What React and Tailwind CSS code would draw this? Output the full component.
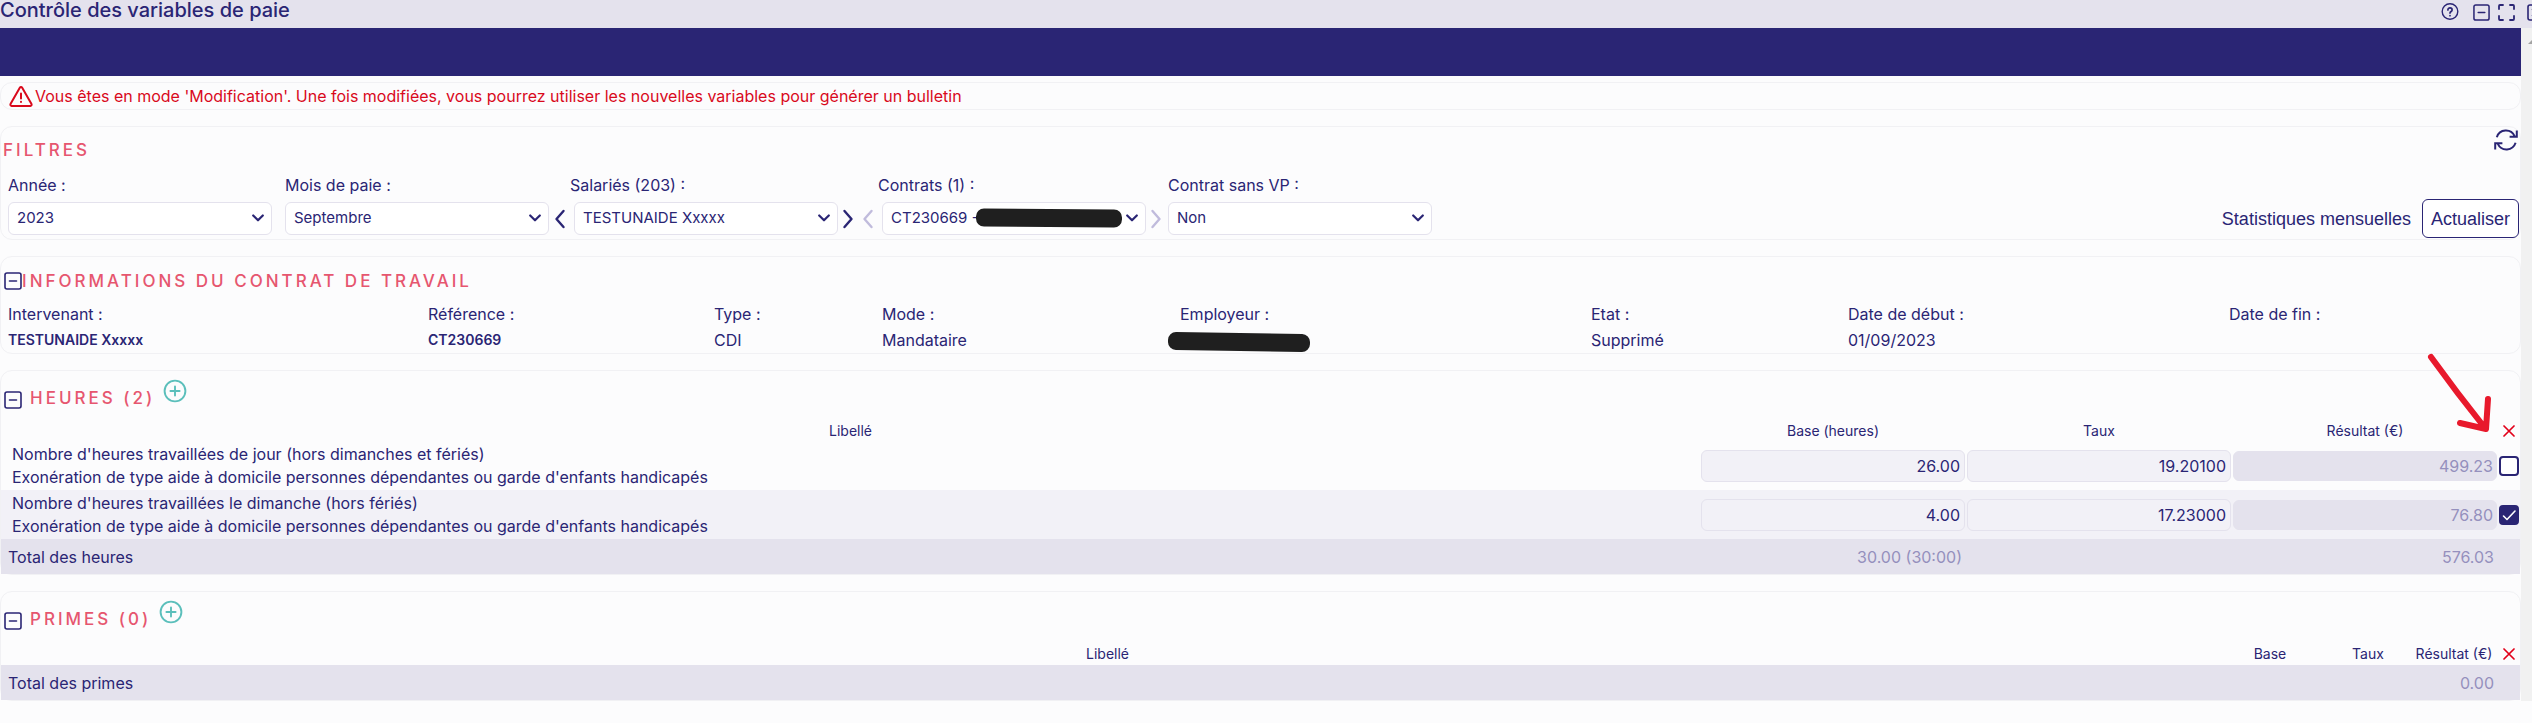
import React from "react";

const SquareMinus = ({ className }) => (
  <svg viewBox="0 0 18 18" className={className} fill="none" stroke="currentColor" strokeWidth="1.6" strokeLinecap="round" aria-hidden="true">
    <rect x="1" y="1" width="16" height="16" rx="2" />
    <path d="M5.5 9h7" />
  </svg>
);

const Plus = () => (
  <svg viewBox="0 0 24 24" className="size-6" fill="none" stroke="currentColor" strokeWidth="1.9" strokeLinecap="round" aria-hidden="true">
    <circle cx="12" cy="12" r="10.4" />
    <path d="M12 7.4v9.2M7.4 12h9.2" />
  </svg>
);

const Angle = ({ left }) => (
  <svg viewBox="0 0 12 20" className="h-5 w-3" fill="none" stroke="currentColor" strokeWidth="2.4" strokeLinecap="round" strokeLinejoin="round" aria-hidden="true">
    <path d={left ? "M9.5 2 2.5 10l7 8" : "M2.5 2l7 8-7 8"} />
  </svg>
);

const Cross = () => (
  <svg viewBox="0 0 12 12" className="mx-auto size-3" fill="none" stroke="#e2001a" strokeWidth="1.7" strokeLinecap="round" role="img" aria-label="Supprimer">
    <path d="M1 1l10 10M11 1L1 11" />
  </svg>
);

const Panel = ({ className = "", children }) => (
  <section className={`relative rounded-xl border border-[#f1f1f4] bg-[#fcfcfd] ${className}`}>{children}</section>
);

const titleClass = "text-[17px] leading-6 font-medium uppercase tracking-[3px] text-[#e6566f]";

function Filter({ id, label, value, className = "", before, after, children }) {
  return (
    <div className={`flex items-end ${className}`}>
      {before}
      <div className="w-[264px]">
        <label htmlFor={id} className={`block h-7 leading-[22px] whitespace-nowrap ${before ? "-ml-1" : ""}`}>{label}</label>
        <div className="relative">
          <select id={id} defaultValue={value} className="block h-[33px] w-full appearance-none rounded-md border border-[#e4e2ed] bg-white pr-8 pl-2 text-[15px] text-[#2a2574]">
            <option>{value}</option>
          </select>
          <svg viewBox="0 0 12 8" className="pointer-events-none absolute top-3 right-2 h-2 w-3" fill="none" stroke="currentColor" strokeWidth="2.2" strokeLinecap="round" strokeLinejoin="round" aria-hidden="true">
            <path d="M1.2 1.5 6 6.3l4.8-4.8" />
          </svg>
          {children}
        </div>
      </div>
      {after}
    </div>
  );
}

const Nav = ({ left, disabled, label }) => (
  <button type="button" disabled={disabled} aria-label={label} className={`flex h-[33px] items-center ${left ? "pr-2" : "pl-1"} ${disabled ? "text-[#c0bbdc]" : ""}`}>
    <Angle left={left} />
  </button>
);

const infos = [
  ["Intervenant :", "TESTUNAIDE Xxxxx", true],
  ["Référence :", "CT230669", true],
  ["Type :", "CDI"],
  ["Mode :", "Mandataire"],
  ["Employeur :", null],
  ["Etat :", "Supprimé"],
  ["Date de début :", "01/09/2023"],
  ["Date de fin :", ""],
];

const heures = [
  { label: "Nombre d'heures travaillées de jour (hors dimanches et fériés)", base: "26.00", taux: "19.20100", res: "499.23", checked: false },
  { label: "Nombre d'heures travaillées le dimanche (hors fériés)", base: "4.00", taux: "17.23000", res: "76.80", checked: true },
];

function SectionTitle({ children, action }) {
  return (
    <div className="flex h-[50px] items-start pt-3 pl-[3px]">
      <button type="button" aria-label="Replier" className="mt-2 mr-2"><SquareMinus className="size-[18px]" /></button>
      <h2 className={`${titleClass} mt-[3px]`}>{children}</h2>
      <button type="button" aria-label={action} className="-mt-1 ml-2 text-[#5bbfbb]"><Plus /></button>
    </div>
  );
}

const cellInput = "block w-full rounded-md border text-right";

export default function App() {
  return (
    <div className="min-h-screen overflow-hidden bg-[#fcfcfd] font-['Inter','Noto_Sans',sans-serif] text-base font-normal text-[#2a2574]">
      <header className="flex h-7 items-start justify-between bg-[#e4e2ed]">
        <h1 className="text-xl leading-5 font-medium whitespace-nowrap">Contrôle des variables de paie</h1>
        <div className="-mr-3 flex items-center pt-[3px]">
          <button type="button" aria-label="Aide" className="mr-[14px]">
            <svg viewBox="0 0 18 18" className="size-[18px]" fill="none" stroke="currentColor" strokeWidth="1.4" strokeLinecap="round">
              <circle cx="9" cy="8.5" r="7.8" />
              <path d="M6.9 6.9c0-2.7 4.2-2.6 4.2 0 0 1.6-2.1 1.5-2.1 3.2M9 12.6v.1" strokeWidth="1.7" />
            </svg>
          </button>
          <button type="button" aria-label="Réduire" className="mr-2"><SquareMinus className="size-[17px]" /></button>
          <button type="button" aria-label="Plein écran" className="mr-3">
            <svg viewBox="0 0 17 17" className="size-[17px]" fill="none" stroke="currentColor" strokeWidth="1.8" strokeLinecap="round">
              <path d="M1 5V2a1 1 0 0 1 1-1h3M12 1h3a1 1 0 0 1 1 1v3M16 12v3a1 1 0 0 1-1 1h-3M5 16H2a1 1 0 0 1-1-1v-3" />
            </svg>
          </button>
          <button type="button" aria-label="Fermer">
            <svg viewBox="0 0 17 17" className="size-[17px]" fill="none" stroke="currentColor" strokeWidth="1.6" strokeLinecap="round">
              <rect x="1" y="1" width="15" height="15" rx="2" />
              <path d="M5.5 5.5l6 6M11.5 5.5l-6 6" />
            </svg>
          </button>
        </div>
      </header>

      <div className="flex">
        <main className="min-w-0 flex-1">
          <div className="h-12 bg-[#2a2574]" />
          <div className="flex flex-col gap-4 pt-1.5">
            <Panel className="flex h-7 items-center pl-2 text-[#d9091c]">
              <svg viewBox="0 0 24 21" className="h-[21px] w-6" fill="none" stroke="currentColor" strokeWidth="2" strokeLinecap="round" strokeLinejoin="round" aria-hidden="true">
                <path d="M10.8 1.8a1.4 1.4 0 0 1 2.4 0l9.3 16.3a1.3 1.3 0 0 1-1.1 1.9H2.6a1.3 1.3 0 0 1-1.1-1.9z" />
                <path d="M12 7.5v5M12 15.8v.1" />
              </svg>
              <p className="pl-0.5 whitespace-nowrap">Vous êtes en mode 'Modification'. Une fois modifiées, vous pourrez utiliser les nouvelles variables pour générer un bulletin</p>
            </Panel>

            <Panel className="h-[114px]">
              <div className="flex justify-between pt-[11px] pl-0.5">
                <h2 className={titleClass}>Filtres</h2>
                <button type="button" aria-label="Rafraîchir" className="-mt-2.5 mr-0.5 h-6">
                  <svg viewBox="0 0 24 24" className="size-6" fill="none" stroke="currentColor" strokeWidth="2" aria-hidden="true">
                    <path d="M2.8 9.2a9.6 9.6 0 0 1 17.8-1.1M22.8 2.4v6.4h-7.2M21.6 14.8a9.6 9.6 0 0 1-17.8 1.1M1.2 21.6v-6.4h7.2" />
                  </svg>
                </button>
              </div>
              <div className="flex items-end justify-between pt-3 pr-px pl-[7px]">
                <div className="flex items-end">
                  <Filter id="annee" label="Année :" value="2023" className="mr-[13px]" />
                  <Filter id="mois" label="Mois de paie :" value="Septembre" className="mr-[5px]" />
                  <Filter id="salaries" label="Salariés (203) :" value="TESTUNAIDE Xxxxx" className="mr-2"
                    before={<Nav left label="Salarié précédent" />} after={<Nav label="Salarié suivant" />} />
                  <Filter id="contrats" label="Contrats (1) :" value="CT230669 -" className="mr-1.5"
                    before={<Nav left disabled label="Contrat précédent" />} after={<Nav disabled label="Contrat suivant" />}>
                    <span className="absolute top-[7px] left-[94px] h-[18px] w-[146px] rotate-[0.4deg] rounded-lg bg-[#1f1f1f]" />
                  </Filter>
                  <Filter id="sansvp" label="Contrat sans VP :" value="Non" />
                </div>
                <div className="flex items-center font-['Liberation_Sans',Arial,sans-serif] text-lg">
                  <button type="button" className="px-[11px] whitespace-nowrap">Statistiques mensuelles</button>
                  <button type="button" className="-my-[3px] h-[39px] rounded-md border border-[#2a2574] bg-white px-2">Actualiser</button>
                </div>
              </div>
            </Panel>

            <Panel className="h-[98px]">
              <div className="flex items-center pt-3 pl-[3px]">
                <button type="button" aria-label="Replier"><SquareMinus className="size-[18px]" /></button>
                <h2 className={`${titleClass} whitespace-nowrap`}>Informations du contrat de travail</h2>
              </div>
              <dl className="grid grid-cols-[420fr_286fr_168fr_286fr_423fr_257fr_381fr_291fr] pt-2 pl-[7px]">
                {infos.map(([k, v, bold]) => (
                  <div key={k} className="min-w-0">
                    <dt className={`leading-[26px] whitespace-nowrap ${v === null ? "pl-3" : ""}`}>{k}</dt>
                    <dd className={`leading-[26px] whitespace-nowrap ${bold ? "text-sm leading-[26px] font-semibold" : ""}`}>
                      {v === null ? <span className="mt-1.5 block h-[18px] w-[142px] rotate-1 rounded-lg bg-[#1f1f1f]" /> : v}
                    </dd>
                  </div>
                ))}
              </dl>
            </Panel>

            <Panel>
              <SectionTitle action="Ajouter une heure">Heures (2)</SectionTitle>
              <table className="w-full table-fixed border-collapse">
                <colgroup>
                  <col />
                  <col className="w-[266px]" />
                  <col className="w-[266px]" />
                  <col className="w-[266px]" />
                  <col className="w-[22px]" />
                </colgroup>
                <thead>
                  <tr className="h-5 text-sm leading-5">
                    <th className="p-0 font-normal">Libellé</th>
                    <th className="p-0 font-normal">Base (heures)</th>
                    <th className="p-0 font-normal">Taux</th>
                    <th className="p-0 font-normal">Résultat (€)</th>
                    <th className="p-0"><Cross /></th>
                  </tr>
                </thead>
                <tbody>
                  {heures.map((h, i) => (
                    <tr key={h.label} className={`h-[49px] ${i % 2 ? "bg-[#f2f1f7]" : ""}`}>
                      <td className="pt-0.5 pb-px pl-[11px] leading-[23px] whitespace-nowrap">
                        <div>{h.label}</div>
                        <div>Exonération de type aide à domicile personnes dépendantes ou garde d'enfants handicapés</div>
                      </td>
                      <td className="px-px py-0"><input aria-label="Base (heures)" defaultValue={h.base} className={`${cellInput} h-8 border-[#e4e2ed] bg-[#f2f1f7] px-1`} /></td>
                      <td className="px-px py-0"><input aria-label="Taux" defaultValue={h.taux} className={`${cellInput} h-8 border-[#e4e2ed] bg-[#f2f1f7] px-1`} /></td>
                      <td className="px-px py-0"><input aria-label="Résultat (€)" readOnly value={h.res} className={`${cellInput} h-[30px] border-[#e4e2ed] bg-[#e4e2ed] px-[3px] text-[#9590bd]`} /></td>
                      <td className="p-0">
                        <span className="relative mx-auto block size-5">
                          <input type="checkbox" defaultChecked={h.checked} aria-label={`Supprimer ${h.label}`} className="peer block size-5 appearance-none rounded border-2 border-[#2a2574] bg-white checked:bg-[#2a2574]" />
                          <svg viewBox="0 0 20 20" className="pointer-events-none absolute inset-0 hidden size-5 peer-checked:block" fill="none" stroke="white" strokeWidth="1.6" strokeLinecap="round" strokeLinejoin="round" aria-hidden="true">
                            <path d="M4.5 11l3.5 3.5L16 6" />
                          </svg>
                        </span>
                      </td>
                    </tr>
                  ))}
                </tbody>
                <tfoot>
                  <tr className="h-[35px] bg-[#e4e2ed]">
                    <td className="py-0 pl-[7px]">Total des heures</td>
                    <td className="py-0 pr-1 text-right text-[#9590bd]">30.00 (30:00)</td>
                    <td />
                    <td className="py-0 pr-1 text-right text-[#9590bd]">576.03</td>
                    <td />
                  </tr>
                </tfoot>
              </table>
              <svg viewBox="0 0 66 82" className="pointer-events-none absolute -top-[18px] right-[27px] h-[82px] w-[66px]" fill="none" stroke="#e8192c" strokeWidth="6" strokeLinecap="round" strokeLinejoin="round" aria-hidden="true">
                <path d="M4 4q26 36 54 71M33 70l26 6 2-30" />
              </svg>
            </Panel>

            <Panel>
              <SectionTitle action="Ajouter une prime">Primes (0)</SectionTitle>
              <table className="w-full table-fixed border-collapse">
                <colgroup>
                  <col />
                  <col className="w-[112px]" />
                  <col className="w-[84px]" />
                  <col className="w-[88px]" />
                  <col className="w-[22px]" />
                </colgroup>
                <thead>
                  <tr className="h-[23px] text-sm leading-5">
                    <th className="p-0 font-normal">Libellé</th>
                    <th className="p-0 font-normal">Base</th>
                    <th className="p-0 font-normal">Taux</th>
                    <th className="p-0 font-normal whitespace-nowrap">Résultat (€)</th>
                    <th className="p-0"><Cross /></th>
                  </tr>
                </thead>
                <tbody>
                  <tr className="h-[35px] bg-[#e4e2ed]">
                    <td className="py-0 pl-[7px]">Total des primes</td>
                    <td />
                    <td />
                    <td className="py-0 pr-1 text-right text-[#9590bd]">0.00</td>
                    <td />
                  </tr>
                </tbody>
              </table>
            </Panel>
          </div>
        </main>
        <div className="w-[11px] overflow-hidden bg-[#f1f1f1] pt-3 pl-[7px]" aria-hidden="true">
          <svg viewBox="0 0 8 4" className="h-1 w-2 max-w-none" fill="#a3a3a3"><path d="M4 0l4 4H0z" /></svg>
        </div>
      </div>
    </div>
  );
}
